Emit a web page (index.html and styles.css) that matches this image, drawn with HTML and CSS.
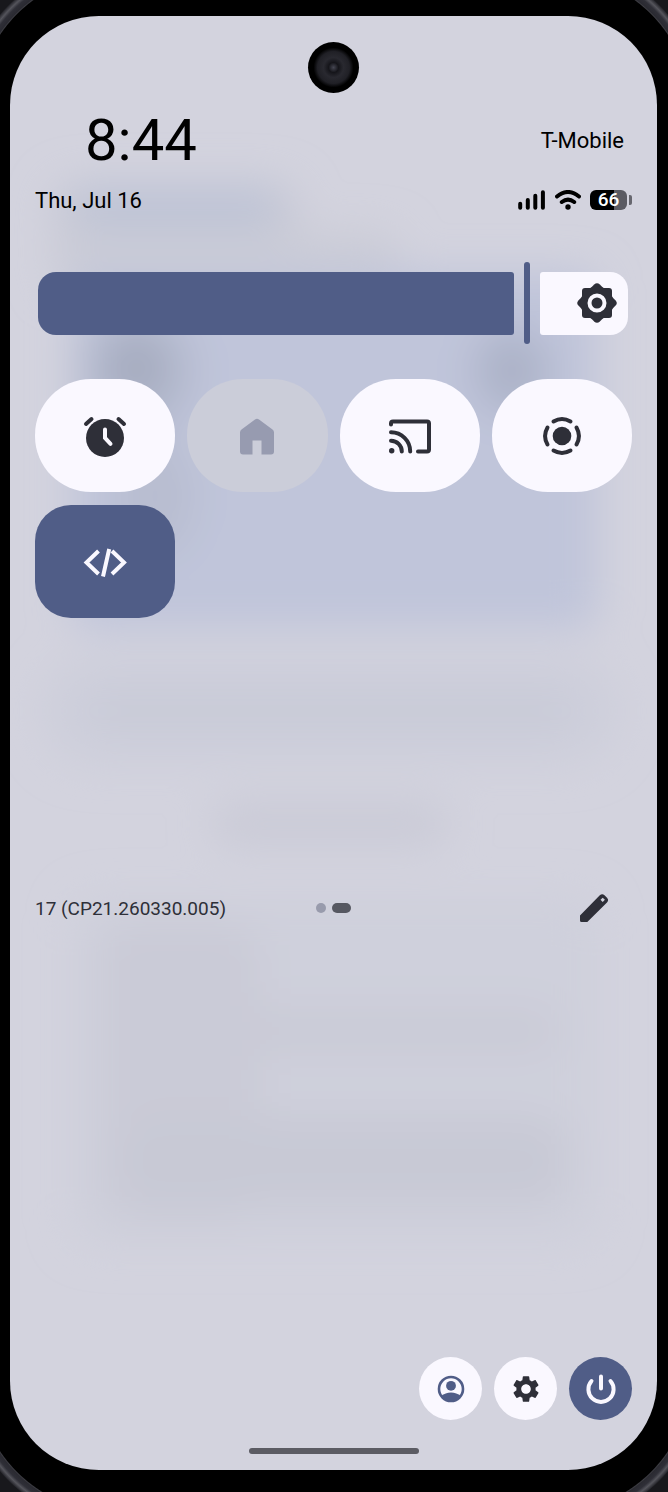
FILE: index.html
```html
<!DOCTYPE html>
<html lang="en">
  <head>
    <meta charset="UTF-8" />
    <meta name="viewport" content="width=device-width, initial-scale=1" />
    <title>Quick Settings</title>
    <link rel="stylesheet" href="styles.css">
  </head>

  <body>
    <div class="phone">
      <main class="screen">
        <svg class="wallpaper" viewBox="0 0 647 1454" preserveAspectRatio="none" aria-hidden="true">
          <defs>
            <filter id="soft" x="-50%" y="-50%" width="200%" height="200%">
              <feGaussianBlur stdDeviation="20" />
            </filter>
          </defs>
          <g filter="url(#soft)">
            <rect x="40" y="165" width="250" height="60" rx="30" fill="#c7c9d6" />
            <rect x="70" y="175" width="195" height="35" rx="18" fill="#bcc2d6" />
            <rect x="40" y="215" width="350" height="60" rx="20" fill="#cbccd7" />
            <rect x="62" y="256" width="526" height="357" rx="20" fill="#c0c5da" />
            <ellipse cx="128" cy="355" rx="55" ry="60" fill="#b1b7cb" />
            <circle cx="126" cy="352" r="24" fill="#a0a6ba" />
            <ellipse cx="502" cy="355" rx="38" ry="42" fill="#acb2c8" />
            <ellipse cx="145" cy="480" rx="40" ry="60" fill="#b8bdd0" />
            <rect x="30" y="640" width="580" height="110" rx="55" fill="#cecfdb" />
            <rect x="80" y="672" width="480" height="46" rx="23" fill="#c9cbd8" />
            <rect x="200" y="785" width="240" height="46" rx="23" fill="#cacbd7" />
            <rect x="60" y="880" width="530" height="350" rx="30" fill="#cfd0dc" />
            <rect x="90" y="905" width="160" height="300" rx="40" fill="#cacbd7" />
            <rect x="130" y="990" width="420" height="50" rx="25" fill="#cacbd7" />
            <rect x="110" y="1100" width="450" height="90" rx="40" fill="#c8c9d5" />
          </g>
        </svg>

        <div class="camera"></div>

        <header class="status">
          <time class="clock">8:44</time>
          <span class="carrier">T-Mobile</span>
          <span class="date">Thu, Jul 16</span>
          <div class="indicators">
            <svg class="signal" viewBox="0 0 28 20" role="img" aria-label="Signal">
              <path d="M2.2 13.7v4M9.8 10v7.7M17.3 5.7v12M24.9 2.3v15.4" />
            </svg>
            <svg class="wifi" viewBox="0 0 26 20" role="img" aria-label="Wi-Fi">
              <path d="M2 6.5Q13-2.500 24 6.500M6.800 12Q13 7.200 19.200 12" />
              <circle cx="13" cy="17" r="2.700" />
            </svg>
            <div class="battery"><span class="level">66</span></div>
          </div>
        </header>

        <div class="brightness">
          <div class="fill"></div>
          <div class="handle"></div>
          <div class="rest">
            <svg class="icon" viewBox="0 0 44 44" aria-hidden="true">
              <rect x="7" y="7" width="30" height="30" rx="3" />
              <rect x="7" y="7" width="30" height="30" rx="4" transform="rotate(45 22 22)" />
              <circle cx="22" cy="22" r="16.500" />
              <circle cx="22" cy="22" r="7.500" fill="none" stroke="#faf8ff" stroke-width="4" />
            </svg>
          </div>
          <input class="range" type="range" min="0" max="100" value="83" aria-label="Brightness" />
        </div>

        <section class="tiles">
          <button class="tile" aria-label="Alarm">
            <svg class="icon" viewBox="0 0 44 44">
              <circle cx="22" cy="24" r="19" />
              <path class="line" d="M3 10l5.500-5M35.500 5l5.500 5" />
              <path class="line light" d="M22 15.500v8.500l5.500 5.800" />
            </svg>
          </button>
          <button class="tile off" aria-label="Home" disabled>
            <svg class="icon" viewBox="0 0 44 44">
              <path d="M20 5.500q2-1.500 4 0l13.500 10q1.500 1 1.500 3v19q0 3-3 3h-9.500v-14h-9v14H8q-3 0-3-3v-19q0-2 1.500-3z" />
            </svg>
          </button>
          <button class="tile" aria-label="Cast">
            <svg class="icon" viewBox="0 0 44 44">
              <path class="line" d="M3 10.500v-1q0-2 2-2h34q2 0 2 2v26q0 2-2 2h-9M3 18.300a19.200 19.200 0 0 1 19.200 19.200M3 26.700a10.800 10.800 0 0 1 10.800 10.800" />
              <circle cx="3.700" cy="36.800" r="2.700" />
            </svg>
          </button>
          <button class="tile" aria-label="Screen record">
            <svg class="icon" viewBox="0 0 44 44">
              <circle cx="22" cy="22" r="9.300" />
              <path class="line" d="M13.500 7.500a17 17 0 0 1 17 0M36.500 13.500a17 17 0 0 1 0 17M30.500 36.500a17 17 0 0 1-17 0M7.500 30.500a17 17 0 0 1 0-17" />
            </svg>
          </button>
          <button class="tile on" aria-label="Developer options">
            <svg class="icon" viewBox="0 0 44 44">
              <path class="line code" d="M15.500 11L3.500 22.500l12 11.500M29 11l12 11.500L29 34M26.200 9l-6.200 27.500" />
            </svg>
          </button>
        </section>

        <div class="build">
          <span class="version">17 (CP21.260330.005)</span>
          <div class="pager">
            <span class="dot"></span>
            <span class="dot current"></span>
          </div>
          <button class="edit" aria-label="Edit tiles">
            <svg viewBox="0 0 30 30">
              <path fill-rule="evenodd" d="M1 22.500L20.800 2.300q2.400-2.300 4.700 0l2.500 2.500q2.200 2.300 0 4.600L8.300 29H2.500Q1 29 1 27.500zM23.700 4.700l-2.200 2.100 2.200 2.200 2.200-2.200z" />
            </svg>
          </button>
        </div>

        <footer class="actions">
          <button class="round user" aria-label="User">
            <svg viewBox="0 0 32 32">
              <circle cx="16" cy="16" r="12" fill="none" stroke="currentColor" stroke-width="2.600" />
              <circle cx="16" cy="12.800" r="4.900" />
              <path d="M6 23q4.500-3.500 10-3.500T26 23a12.500 12.500 0 0 1-20 0z" />
            </svg>
          </button>
          <button class="round" aria-label="Settings">
            <svg viewBox="0 0 24 24">
              <path d="M19.140 12.940c.040-.300.060-.610.060-.940 0-.320-.020-.640-.070-.940l2.030-1.580c.180-.140.230-.410.120-.610l-1.920-3.320c-.120-.220-.370-.290-.590-.220l-2.390.960c-.500-.380-1.030-.700-1.620-.940l-.360-2.540c-.040-.240-.240-.410-.480-.410h-3.840c-.240 0-.430.170-.470.410l-.360 2.540c-.590.240-1.130.570-1.620.940l-2.390-.960c-.220-.080-.470 0-.590.220L2.740 8.870c-.120.210-.080.470.120.610l2.030 1.580c-.050.300-.090.630-.090.940s.020.640.070.940l-2.030 1.580c-.180.140-.230.410-.120.610l1.920 3.320c.120.220.370.290.590.220l2.390-.960c.500.380 1.030.700 1.620.940l.360 2.540c.050.240.240.410.480.410h3.840c.240 0 .440-.170.470-.410l.360-2.540c.590-.240 1.130-.560 1.620-.940l2.390.960c.220.080.470 0 .590-.220l1.920-3.320c.120-.220.070-.470-.120-.610l-2.010-1.580zM12 15.600c-1.980 0-3.600-1.620-3.600-3.600s1.620-3.600 3.600-3.600 3.600 1.620 3.600 3.600-1.620 3.600-3.600 3.600z" />
            </svg>
          </button>
          <button class="round power" aria-label="Power">
            <svg viewBox="0 0 32 32">
              <path d="M16 3.500v12M6.500 8a12.600 12.600 0 1 0 19 0" fill="none" stroke="currentColor" stroke-width="4" stroke-linecap="round" />
            </svg>
          </button>
        </footer>

        <div class="nav-handle"></div>
      </main>
    </div>
  </body>
</html>
```
FILE: styles.css
```css
* {
  box-sizing: border-box;
}

body {
  margin: 0;
  background: #000;
  font-family: Roboto, "Liberation Sans", sans-serif;
  color: #000;
}

button {
  padding: 0;
  border: none;
  cursor: pointer;
}

svg {
  display: block;
  fill: currentColor;
}

/* metal rim shows in the four corners only */
.phone {
  --rim: #000 138px, #3c3c42 139px, #2a2a31 140px, #2f2f37 144px, #55555c 147px, #2c2c32 150px, #18181c 151px;
  min-height: 100vh;
  padding: 16px 11px 22px 10px;
  background:
    radial-gradient(circle at 115px 112px, var(--rim)) left top / 115px 112px no-repeat,
    radial-gradient(circle at 0 112px, var(--rim)) right top / 115px 112px no-repeat,
    radial-gradient(circle at 115px 0, var(--rim)) left bottom / 115px 118px no-repeat,
    radial-gradient(circle at 0 0, var(--rim)) right bottom / 115px 118px no-repeat,
    #000;
}

.screen {
  position: relative;
  display: flex;
  flex-direction: column;
  min-height: calc(100vh - 38px);
  padding: 26px 25px 16px;
  border-radius: 89px;
  background: #d3d3de;
  overflow: hidden;
  isolation: isolate;
}

.wallpaper {
  position: absolute;
  inset: 0;
  z-index: -1;
  width: 100%;
  height: 100%;
}

.camera {
  align-self: center;
  width: 51px;
  height: 51px;
  border-radius: 50%;
  background: radial-gradient(circle, #454652 0, #15151a 5px, #292930 10px, #202026 16px, #000 20px);
}

/* status bar */
.status {
  display: grid;
  grid-template-columns: 1fr auto;
  grid-template-rows: 70px 30px;
  row-gap: 10px;
  align-items: center;
  margin-top: 12px;
  font-size: 22px;
}

.clock {
  padding-left: 50px;
  font-size: 58px;
  line-height: 70px;
}

.carrier {
  padding-right: 8px;
  text-align: right;
}

.indicators {
  display: flex;
  align-items: center;
  justify-content: flex-end;
  gap: 9px;
}

.signal,
.wifi {
  height: 20px;
  stroke: #000;
  stroke-width: 4;
  stroke-linecap: round;
}

.signal {
  width: 28px;
}

.wifi {
  width: 26px;
}

.wifi path {
  fill: none;
}

.wifi circle {
  stroke: none;
}

.battery {
  display: flex;
  align-items: center;
  gap: 2px;
}

.battery::after {
  content: "";
  width: 3px;
  height: 10px;
  border-radius: 0 2px 2px 0;
  background: #66666e;
}

.level {
  width: 37px;
  border-radius: 6px;
  background: linear-gradient(90deg, #000 66%, #5b5b63 66%);
  color: #fff;
  font-size: 19px;
  font-weight: 500;
  line-height: 20px;
  text-align: center;
}

/* brightness */
.brightness {
  position: relative;
  display: flex;
  align-items: center;
  gap: 10px;
  height: 82px;
  margin: 47px 4px 0 3px;
}

.fill,
.rest {
  height: 63px;
}

.fill {
  flex: 476;
  border-radius: 18px 3px 3px 18px;
  background: #505d87;
}

.handle {
  width: 6px;
  height: 82px;
  border-radius: 3px;
  background: #505d87;
}

.rest {
  flex: 88;
  display: flex;
  align-items: center;
  justify-content: flex-end;
  border-radius: 3px 18px 18px 3px;
  background: #faf8ff;
  color: #2e2f38;
}

.rest .icon {
  margin-right: 9px;
}

.range {
  position: absolute;
  inset: 0;
  width: 100%;
  height: 100%;
  margin: 0;
  opacity: 0;
  cursor: pointer;
}

/* tiles */
.tiles {
  display: grid;
  grid-template-columns: repeat(4, 1fr);
  grid-auto-rows: 113px;
  align-content: start;
  gap: 13px 12px;
  min-height: 509px;
  margin-top: 35px;
}

.tile {
  display: flex;
  align-items: center;
  justify-content: center;
  border-radius: 56px;
  background: #faf8ff;
  color: #2e2f38;
}

.tile.off {
  background: #cbcdd9;
  color: #979bb0;
}

.tile.on {
  border-radius: 36px;
  background: #505d87;
  color: #faf8ff;
}

.icon {
  width: 44px;
  height: 44px;
}

.line {
  fill: none;
  stroke: currentColor;
  stroke-width: 4;
  stroke-linecap: round;
}

.light {
  stroke: #faf8ff;
}

.code {
  stroke-linecap: butt;
}

/* build number, pager, edit */
.build {
  display: grid;
  grid-template-columns: 1fr auto 1fr;
  align-items: center;
}

.version {
  font-size: 19px;
  color: #2e2f38;
}

.pager {
  display: flex;
  gap: 6px;
}

.dot {
  width: 10px;
  height: 10px;
  border-radius: 5px;
  background: #989bac;
}

.dot.current {
  width: 19px;
  background: #565861;
}

.edit {
  display: flex;
  align-items: center;
  justify-content: center;
  justify-self: end;
  width: 40px;
  height: 40px;
  margin-right: 18px;
  background: none;
  color: #2e2f38;
}

.edit svg {
  width: 30px;
  height: 30px;
}

/* bottom buttons */
.actions {
  display: flex;
  justify-content: flex-end;
  gap: 12px;
  margin-top: auto;
}

.round {
  display: flex;
  align-items: center;
  justify-content: center;
  width: 63px;
  height: 63px;
  border-radius: 50%;
  background: #faf8ff;
  color: #2e2f38;
}

.round svg {
  width: 32px;
  height: 32px;
}

.round.user {
  color: #505d87;
}

.round.power {
  background: #505d87;
  color: #faf8ff;
}

.nav-handle {
  align-self: center;
  width: 170px;
  height: 6px;
  margin-top: 28px;
  border-radius: 3px;
  background: #5b5b63;
}
```
